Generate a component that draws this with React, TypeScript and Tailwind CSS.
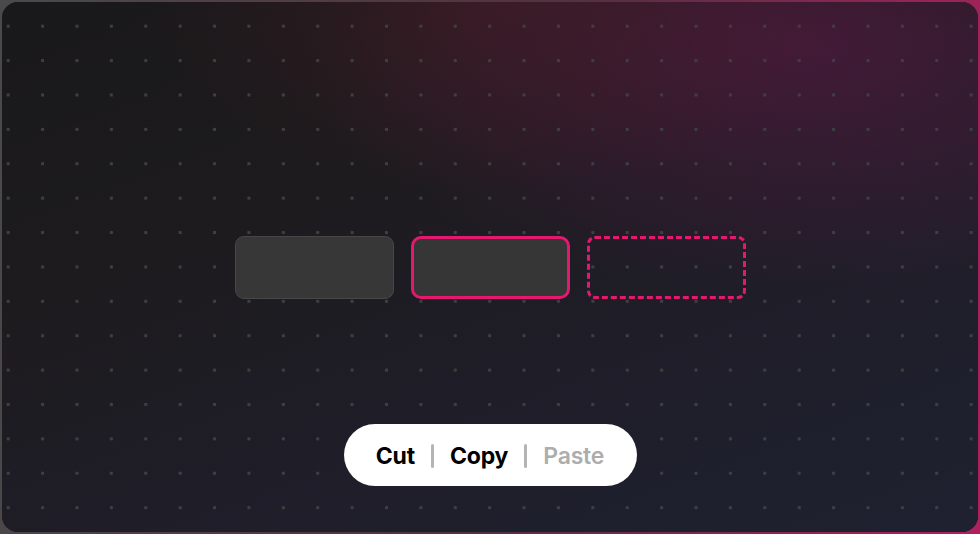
export default function App() {
  return (
    <div className="h-[534px] w-[980px] bg-[linear-gradient(100deg,#4a4a4a_0%,#55303f_55%,#b0205e_100%)] p-[2px]">
      <div
        className="relative flex h-full w-full flex-col items-center overflow-hidden rounded-[16px] bg-[#1a1a1c]"
        style={{ fontFamily: '"Inter", "Liberation Sans", sans-serif' }}
      >
        {/* colour wash */}
        <div className="absolute inset-0 bg-[linear-gradient(160deg,#19181a_0%,#1d1b1e_35%,#1f1e2a_70%,#1e2130_100%)]" />
        <div className="absolute inset-0 bg-[radial-gradient(ellipse_65%_60%_at_82%_8%,rgba(120,25,90,0.42),transparent_78%)]" />
        <div className="absolute inset-0 bg-[radial-gradient(ellipse_45%_45%_at_50%_0%,rgba(90,30,40,0.35),transparent_80%)]" />
        {/* dot grid */}
        <div className="absolute inset-0 bg-[radial-gradient(circle,#3f3f42_1.5px,transparent_2px)] bg-[length:34.4px_34.4px] bg-[position:-11px_7px]" />

        <div className="relative mt-[234px] flex gap-[17px]">
          <div className="h-[63px] w-[159px] rounded-[9px] border border-[#474747] bg-[#373737]" />
          <div className="h-[63px] w-[159px] rounded-[10px] border-[3px] border-[#e5186f] bg-[#363636]" />
          <div className="h-[63px] w-[159px] rounded-[8px] border-[3px] border-dashed border-[#e5186f]" />
        </div>

        <div className="relative mt-[125px] flex h-[62px] w-[293px] items-center justify-center rounded-full bg-white pt-[2px] text-[23px] font-bold tracking-[-0.2px]">
          <span className="text-black">Cut</span>
          <span className="mx-[16px] h-[24px] w-[3px] rounded-full bg-[#b4b4b4]" />
          <span className="text-black">Copy</span>
          <span className="mx-[16px] h-[24px] w-[3px] rounded-full bg-[#b4b4b4]" />
          <span className="font-semibold text-[#adadad]">Paste</span>
        </div>
      </div>
    </div>
  );
}
